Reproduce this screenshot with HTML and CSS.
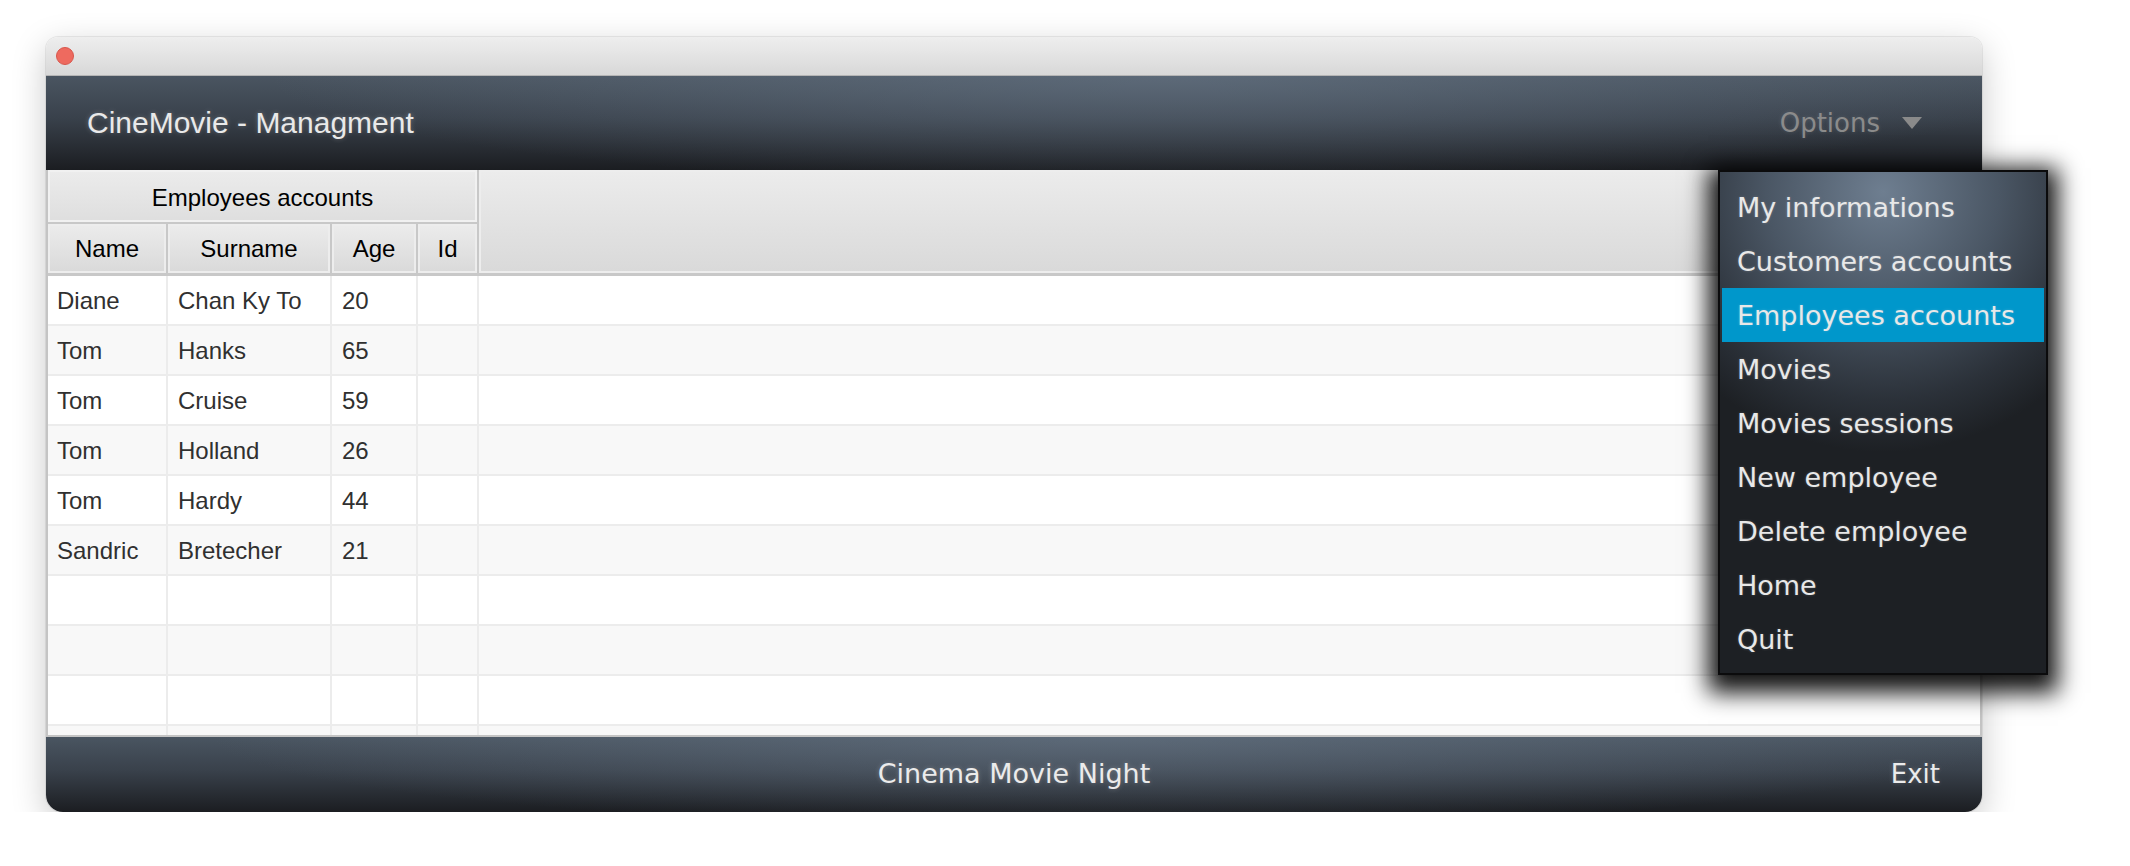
FILE: index.html
```html
<!DOCTYPE html>
<html lang="en">
<head>
<meta charset="utf-8">
<title>CineMovie - Managment</title>
<link rel="stylesheet" href="styles.css">
</head>
<body>
<div class="window">
  <div class="titlebar"><span class="close"></span></div>
  <div class="header">
    <div class="app-title">CineMovie - Managment</div>
    <div class="options">
      <span>Options</span>
      <svg class="caret" width="20" height="12" viewBox="0 0 20 12"><polygon points="0,0 20,0 10,12" fill="#8a8a8a"/></svg>
    </div>
  </div>
  <div class="table">
    <div class="thead">
      <div class="group">
        <div class="group-title">Employees accounts</div>
        <div class="cols">
          <div class="th">Name</div>
          <div class="th">Surname</div>
          <div class="th">Age</div>
          <div class="th">Id</div>
        </div>
      </div>
      <div class="th filler-head"></div>
    </div>
    <div class="tbody">
      <div class="row"><div class="td">Diane</div><div class="td">Chan Ky To</div><div class="td">20</div><div class="td"></div><div class="td"></div></div>
      <div class="row"><div class="td">Tom</div><div class="td">Hanks</div><div class="td">65</div><div class="td"></div><div class="td"></div></div>
      <div class="row"><div class="td">Tom</div><div class="td">Cruise</div><div class="td">59</div><div class="td"></div><div class="td"></div></div>
      <div class="row"><div class="td">Tom</div><div class="td">Holland</div><div class="td">26</div><div class="td"></div><div class="td"></div></div>
      <div class="row"><div class="td">Tom</div><div class="td">Hardy</div><div class="td">44</div><div class="td"></div><div class="td"></div></div>
      <div class="row"><div class="td">Sandric</div><div class="td">Bretecher</div><div class="td">21</div><div class="td"></div><div class="td"></div></div>
      <div class="row"><div class="td"></div><div class="td"></div><div class="td"></div><div class="td"></div><div class="td"></div></div>
      <div class="row"><div class="td"></div><div class="td"></div><div class="td"></div><div class="td"></div><div class="td"></div></div>
      <div class="row"><div class="td"></div><div class="td"></div><div class="td"></div><div class="td"></div><div class="td"></div></div>
      <div class="row"><div class="td"></div><div class="td"></div><div class="td"></div><div class="td"></div><div class="td"></div></div>
    </div>
  </div>
  <div class="footer">
    <div></div>
    <div class="footer-title">Cinema Movie Night</div>
    <div class="exit">Exit</div>
  </div>
  <ul class="menu">
    <li class="item">My informations</li>
    <li class="item">Customers accounts</li>
    <li class="item active">Employees accounts</li>
    <li class="item">Movies</li>
    <li class="item">Movies sessions</li>
    <li class="item">New employee</li>
    <li class="item">Delete employee</li>
    <li class="item">Home</li>
    <li class="item">Quit</li>
  </ul>
</div>
</body>
</html>
```
FILE: styles.css
```css
* { box-sizing: border-box; }

body {
  margin: 0;
  background: #ffffff;
  font-family: "Liberation Sans", Arial, sans-serif;
}

.window {
  position: relative;
  margin: 37px 0 0 46px;
  width: 1936px;
  border-radius: 12px 12px 17px 17px;
  background: #ffffff;
  box-shadow: 0 10px 34px rgba(0, 0, 0, 0.22), 0 0 0 1px rgba(0, 0, 0, 0.07);
}

.titlebar {
  height: 39px;
  border-bottom: 1px solid #b5b5b5;
  background: linear-gradient(#eeeeee, #d8d8d8);
  border-radius: 12px 12px 0 0;
  padding-left: 10px;
  display: flex;
  align-items: center;
}

.close {
  width: 18px;
  height: 18px;
  border-radius: 50%;
  background: #ee6a5f;
  border: 1px solid #d8564b;
}

.header {
  height: 94px;
  display: flex;
  align-items: center;
  justify-content: space-between;
  padding: 0 60px 0 41px;
  background:
    radial-gradient(ellipse 900px 110px at 58% 0%, rgba(108, 123, 140, 0.55), rgba(108, 123, 140, 0) 100%),
    linear-gradient(#4a5561 0%, #39414b 45%, #1b1d21 100%);
}

.app-title {
  color: #e9e9e9;
  font-size: 30px;
  text-shadow: 0 0 5px rgba(255, 255, 255, 0.25);
}

.options {
  display: flex;
  align-items: center;
  gap: 22px;
  color: #8b8b8b;
  font-family: "DejaVu Sans", sans-serif;
  font-size: 26px;
  text-shadow: 0 0 4px rgba(255, 255, 255, 0.12);
}

.caret { display: block; }

.table {
  height: 567px;
  display: flex;
  flex-direction: column;
  border-left: 2px solid #c4c4c4;
  border-right: 2px solid #c4c4c4;
  border-bottom: 2px solid #c4c4c4;
  overflow: hidden;
  background: #ffffff;
}

.thead {
  display: flex;
  border-bottom: 3px solid #c8c8c8;
}

.group {
  width: 431px;
  display: flex;
  flex-direction: column;
  border-right: 2px solid #c8c8c8;
}

.group-title {
  height: 54px;
  display: flex;
  align-items: center;
  justify-content: center;
  font-size: 24px;
  color: #000000;
  border-bottom: 2px solid #c8c8c8;
  background: linear-gradient(#ececec, #dedede);
  box-shadow: inset 0 0 0 2px #f1f1f1;
  padding-top: 4px;
}

.cols {
  display: grid;
  grid-template-columns: 120px 164px 86px 59px;
  height: 49px;
}

.th {
  display: flex;
  align-items: center;
  justify-content: center;
  font-size: 24px;
  color: #000000;
  background: linear-gradient(#ececec, #d9d9d9);
  box-shadow: inset 0 0 0 2px #ededed;
  border-right: 2px solid #c8c8c8;
}

.cols .th:last-child { border-right: none; }

.filler-head {
  flex: 1;
  border-right: none;
}

.tbody {
  flex: 1;
  overflow: hidden;
}

.row {
  display: grid;
  grid-template-columns: 120px 164px 86px 61px 1fr;
  height: 50px;
  border-bottom: 2px solid #ececec;
  background: #ffffff;
}

.row:nth-child(even) { background: #f8f8f8; }

.td {
  display: flex;
  align-items: center;
  padding-left: 9px;
  padding-top: 2px;
  font-size: 24px;
  color: #303030;
  border-right: 2px solid #ececec;
}

.td:nth-child(2), .td:nth-child(3) { padding-left: 10px; }

.td:last-child { border-right: none; }

.footer {
  height: 75px;
  display: grid;
  grid-template-columns: 1fr auto 1fr;
  align-items: center;
  padding: 0 42px 2px 42px;
  border-radius: 0 0 17px 17px;
  font-family: "DejaVu Sans", sans-serif;
  color: #ebebeb;
  background:
    radial-gradient(ellipse 900px 90px at 55% 0%, rgba(108, 123, 140, 0.55), rgba(108, 123, 140, 0) 100%),
    linear-gradient(#4a5561 0%, #39414b 45%, #1b1d21 100%);
}

.footer-title {
  font-size: 27px;
  text-shadow: 0 0 5px rgba(255, 255, 255, 0.25);
}

.exit {
  justify-self: end;
  font-size: 26px;
  text-shadow: 0 0 5px rgba(255, 255, 255, 0.2);
}

.menu {
  position: absolute;
  left: 1672px;
  top: 133px;
  width: 330px;
  margin: 0;
  padding: 8px 2px 7px;
  list-style: none;
  border: 2px solid #0b0b0c;
  background:
    radial-gradient(ellipse 260px 260px at 50% 4%, rgba(110, 126, 144, 1) 0%, rgba(74, 86, 100, 1) 45%, rgba(43, 49, 57, 1) 80%, rgba(29, 32, 36, 1) 100%);
  box-shadow: 0 8px 22px 10px rgba(0, 0, 0, 0.92);
  font-family: "DejaVu Sans", sans-serif;
  font-size: 27px;
  color: #e8e8e8;
}

.item {
  height: 54px;
  display: flex;
  align-items: center;
  padding-left: 15px;
  text-shadow: 0 0 3px rgba(255, 255, 255, 0.2);
}

.item.active {
  background: #0097cb;
}
```
